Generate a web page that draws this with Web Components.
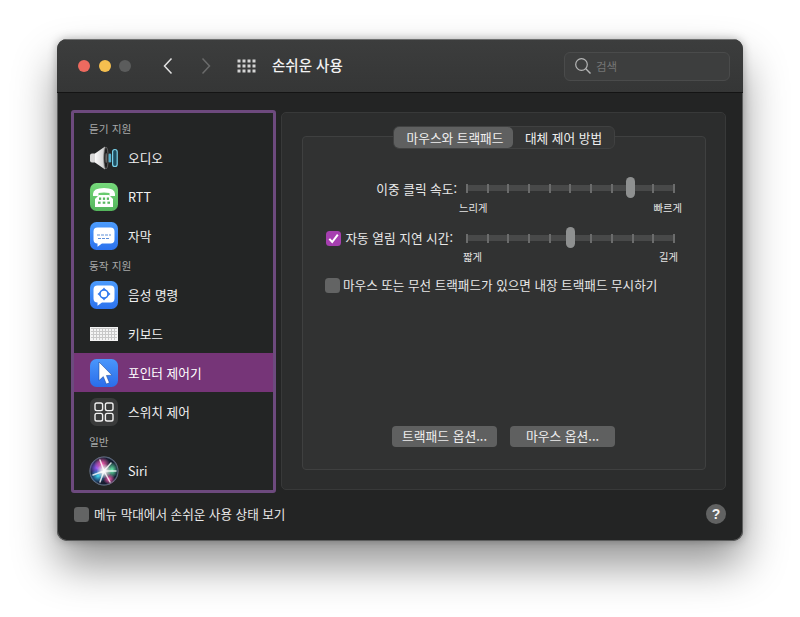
<!DOCTYPE html>
<html lang="ko">
<head>
<meta charset="utf-8">
<title>손쉬운 사용</title>
<style>
  html, body { margin: 0; height: 100%; overflow: hidden; }
  body {
    background: #fff;
    font-family: "Noto Sans CJK KR", "Liberation Sans", sans-serif;
    color: #e8e8e8;
  }
</style>
</head>
<body>
<pref-window>
  <title-bar slot="title" heading="손쉬운 사용"></title-bar>

  <side-list slot="side">
    <side-heading first>듣기 지원</side-heading>
    <side-item icon="audio">오디오</side-item>
    <side-item icon="rtt">RTT</side-item>
    <side-item icon="captions">자막</side-item>
    <side-heading>동작 지원</side-heading>
    <side-item icon="voice">음성 명령</side-item>
    <side-item icon="keyboard">키보드</side-item>
    <side-item icon="pointer" selected>포인터 제어기</side-item>
    <side-item icon="switch">스위치 제어</side-item>
    <side-heading>일반</side-heading>
    <side-item icon="siri">Siri</side-item>
  </side-list>

  <tab-panel slot="main">
    <seg-tabs slot="tabs">
      <span class="on">마우스와 트랙패드</span>
      <span>대체 제어 방법</span>
    </seg-tabs>

    <setting-row style="--top:41px;--end:457px">
      <span slot="label">이중 클릭 속도:</span>
      <tick-slider value="0.79" drop="3" min-label="느리게" max-label="빠르게"></tick-slider>
    </setting-row>

    <setting-row style="--top:13px;--end:453px">
      <mac-check slot="label" checked gap="4" style="font-size:12.7px">자동 열림 지연 시간:</mac-check>
      <tick-slider value="0.5" min-label="짧게" max-label="길게" inset="4"></tick-slider>
    </setting-row>

    <mac-check gap="3" style="margin:12px 0 0 22px">마우스 또는 무선 트랙패드가 있으면 내장 트랙패드 무시하기</mac-check>

    <button-row slot="actions">
      <mac-button>트랙패드 옵션...</mac-button>
      <mac-button>마우스 옵션...</mac-button>
    </button-row>
  </tab-panel>

  <mac-check slot="foot" gap="5">메뉴 막대에서 손쉬운 사용 상태 보기</mac-check>
  <help-button slot="foot"></help-button>
</pref-window>

<script>
// small helper so each element only has to hand over its markup
function shadow(el, html) {
  el.attachShadow({ mode: 'open' }).innerHTML = html
}

const ICONS = {
  audio: `
    <defs>
      <linearGradient id="cone" x1="0" x2="1"><stop offset="0" stop-color="#fafafa"/><stop offset=".7" stop-color="#d6d6d6"/><stop offset="1" stop-color="#8a8a8a"/></linearGradient>
    </defs>
    <rect x="1" y="10.5" width="6.5" height="9" rx="2" fill="#d8d8d8"/>
    <path d="M6 10.5 L16 3.5 Q18.5 15 16 26.5 L6 19.5Z" fill="url(#cone)"/>
    <ellipse cx="17" cy="15" rx="2.2" ry="11" fill="#1d1d1d" stroke="#7b7b7b" stroke-width=".7"/>
    <ellipse cx="17.2" cy="15" rx=".9" ry="5" fill="#666"/>
    <rect x="19.6" y="10.5" width="2.6" height="9" rx="1.3" fill="#56b2cf"/>
    <rect x="23.6" y="6.5" width="4.6" height="17" rx="2.3" fill="#1e4e60" stroke="#7ad2ea" stroke-width="1.2"/>`,
  rtt: `
    <defs><linearGradient id="rg" x1="0" x2="0" y1="0" y2="1"><stop offset="0" stop-color="#76d97b"/><stop offset="1" stop-color="#54b55c"/></linearGradient></defs>
    <rect x="1" y="1" width="28" height="28" rx="6.5" fill="url(#rg)"/>
    <path d="M4 12 Q4 6 15 6 Q26 6 26 12 L26 14 L20.5 14 L20.5 11 Q15 9.8 9.5 11 L9.5 14 L4 14Z" fill="#fff"/>
    <path d="M10 13 L20 13 L24 17 L24 25 L6 25 L6 17Z" fill="#fff"/>
    <g fill="#58b860">
      <rect x="10" y="15.5" width="2.2" height="2.4"/><rect x="13.9" y="15.5" width="2.2" height="2.4"/><rect x="17.8" y="15.5" width="2.2" height="2.4"/>
      <rect x="9" y="19.6" width="2.6" height="2.2"/><rect x="13.7" y="19.6" width="2.6" height="2.2"/><rect x="18.4" y="19.6" width="2.6" height="2.2"/>
    </g>`,
  captions: `
    <defs><linearGradient id="cg" x1="0" x2="0" y1="0" y2="1"><stop offset="0" stop-color="#4c9bfb"/><stop offset="1" stop-color="#2c72ee"/></linearGradient></defs>
    <rect x="1" y="1" width="28" height="28" rx="6.5" fill="url(#cg)"/>
    <path d="M8.5 6.5 H21.5 Q25.5 6.5 25.5 10.5 V18.5 Q25.5 22.5 21.5 22.5 H13 L8.5 25.8 V22.5 Q4.5 22.5 4.5 18.5 V10.5 Q4.5 6.5 8.5 6.5Z" fill="#fff"/>
    <path d="M8 14h14M9 17.5h12" stroke="#5e8fd8" stroke-width="1.2" stroke-dasharray="3 1"/>`,
  voice: `
    <defs><linearGradient id="vg" x1="0" x2="0" y1="0" y2="1"><stop offset="0" stop-color="#4c9bfb"/><stop offset="1" stop-color="#2c72ee"/></linearGradient></defs>
    <rect x="1" y="1" width="28" height="28" rx="6.5" fill="url(#vg)"/>
    <path d="M8.5 5.5 H21.5 Q25.5 5.5 25.5 9.5 V18.5 Q25.5 22.5 21.5 22.5 H13 L8.5 25.8 V22.5 Q4.5 22.5 4.5 18.5 V9.5 Q4.5 5.5 8.5 5.5Z" fill="#fff"/>
    <circle cx="15" cy="14" r="4" fill="none" stroke="#2f78ee" stroke-width="1.6"/>
    <g fill="#2f78ee"><path d="M15 7.5l2 2.4h-4z"/><path d="M15 20.5l2-2.4h-4z"/><path d="M8.5 14l2.4-2v4z"/><path d="M21.5 14l-2.4-2v4z"/></g>`,
  keyboard: `
    <defs><pattern id="keys" x="1" y="9" width="3" height="3" patternUnits="userSpaceOnUse"><rect width="3" height="3" fill="#f4f4f4"/><path d="M0 .5H3M.5 0V3" stroke="#c8c8c8" stroke-width="1"/></pattern></defs>
    <rect x="1" y="8" width="28" height="14" fill="#f2f2f2"/>
    <rect x="2" y="9" width="26" height="12" fill="url(#keys)"/>`,
  pointer: `
    <defs><linearGradient id="pg" x1="0" x2="0" y1="0" y2="1"><stop offset="0" stop-color="#4a97fb"/><stop offset="1" stop-color="#2a6dea"/></linearGradient></defs>
    <rect x="1" y="1" width="28" height="28" rx="6.5" fill="url(#pg)"/>
    <path d="M10 4 L10 22.5 L14.3 18.6 L17.3 26 L20.4 24.7 L17.4 17.5 L23 17.2Z" fill="#fff" stroke="#16408f" stroke-width=".5"/>`,
  switch: `
    <rect x="1" y="1" width="28" height="28" rx="6.5" fill="#3a3b3b"/>
    <g fill="none" stroke="#f0f0f0" stroke-width="1.4">
      <rect x="6" y="6" width="7.6" height="7.6" rx="1.8"/><rect x="16.4" y="6" width="7.6" height="7.6" rx="1.8"/>
      <rect x="6" y="16.4" width="7.6" height="7.6" rx="1.8"/><rect x="16.4" y="16.4" width="7.6" height="7.6" rx="1.8"/>
    </g>`,
  siri: `
    <defs>
      <radialGradient id="sg"><stop offset="0" stop-color="#2a3044"/><stop offset=".88" stop-color="#141c30"/><stop offset="1" stop-color="#76859c"/></radialGradient>
      <radialGradient id="s1"><stop offset="0" stop-color="#ff5cb4"/><stop offset="1" stop-color="#ff5cb4" stop-opacity="0"/></radialGradient>
      <radialGradient id="s2"><stop offset="0" stop-color="#3fe0f2"/><stop offset="1" stop-color="#2a8cf0" stop-opacity="0"/></radialGradient>
      <radialGradient id="s3"><stop offset="0" stop-color="#6cf5b0"/><stop offset="1" stop-color="#5cf0a8" stop-opacity="0"/></radialGradient>
      <radialGradient id="s4"><stop offset="0" stop-color="#9a5cff"/><stop offset="1" stop-color="#7a5cff" stop-opacity="0"/></radialGradient>
      <radialGradient id="s5"><stop offset="0" stop-color="#fff"/><stop offset=".4" stop-color="#fff" stop-opacity=".75"/><stop offset="1" stop-color="#fff" stop-opacity="0"/></radialGradient>
    </defs>
    <circle cx="15" cy="15" r="14.5" fill="url(#sg)"/>
    <ellipse cx="8" cy="12" rx="8" ry="8" fill="url(#s4)"/>
    <ellipse cx="13" cy="8" rx="8" ry="7" fill="url(#s1)"/>
    <ellipse cx="9" cy="20" rx="8" ry="7" fill="url(#s2)"/>
    <ellipse cx="23" cy="14" rx="6" ry="8" fill="url(#s3)"/>
    <ellipse cx="20" cy="23" rx="6" ry="5.5" fill="url(#s1)"/>
    <path d="M15 15 L11 4 M15 15 L22 7 M15 15 L27 15 M15 15 L21 26 M15 15 L4 19 M15 15 L11 26" stroke="#fff" stroke-width="1.5" stroke-linecap="round" opacity=".8"/>
    <circle cx="15" cy="15" r="7.5" fill="url(#s5)"/>`
}

class PrefWindow extends HTMLElement {
  constructor() {
    super()
    shadow(this, `
      <style>
        :host { display: block; width: 686px; margin: 39px 0 0 57px; }
        .win {
          height: 502px; box-sizing: border-box;
          display: flex; flex-direction: column;
          background: #232424; border-radius: 10px; overflow: hidden;
          box-shadow: inset 0 0 0 1px #5c5d5d;
        }
        .shadow { border-radius: 10px; box-shadow: 0 24px 44px rgba(0,0,0,.42), 0 0 10px rgba(0,0,0,.28); }
        .body { flex: 1; display: flex; gap: 5px; padding: 17px 17px 0 14px; }
        .foot {
          height: 48px; box-sizing: border-box; padding: 0 17px 6px 17px;
          display: flex; align-items: center; justify-content: space-between;
        }
      </style>
      <div class="shadow"><div class="win">
        <slot name="title"></slot>
        <div class="body">
          <slot name="side"></slot>
          <slot name="main"></slot>
        </div>
        <div class="foot"><slot name="foot"></slot></div>
      </div></div>`)
  }
}

class TitleBar extends HTMLElement {
  constructor() {
    super()
    shadow(this, `
      <style>
        :host {
          display: flex; align-items: center; height: 54px; box-sizing: border-box;
          background: linear-gradient(#3c3d3d, #353636);
          border-top: 1px solid #6f7070; border-bottom: 1px solid #141414;
          padding: 0 13px 0 21px; flex: none;
        }
        .dot { width: 12px; height: 12px; border-radius: 50%; margin-right: 8.5px; }
        .nav { display: block; }
        .grid { margin-left: 25px; display: block; }
        h1 { margin: 0 0 2px 15px; font: 500 14.5px/20px "Noto Sans CJK KR", sans-serif; color: #f2f2f2; flex: 1; }
        .search {
          width: 166px; height: 29px; box-sizing: border-box;
          border: 1px solid #4a4b4b; border-radius: 6px; background: #3d3e3e;
          display: flex; align-items: center; gap: 4px; padding-left: 9px;
          font-size: 11.5px; color: #757676;
        }
      </style>
      <span class="dot" style="background:#ee6a5f"></span>
      <span class="dot" style="background:#f5bf4f"></span>
      <span class="dot" style="background:#5b5c5c;margin-right:0"></span>
      <svg class="nav" style="margin-left:31px" width="12" height="18" viewBox="0 0 12 18"><path d="M9.5 1.5 L2.5 9 L9.5 16.5" fill="none" stroke="#e2e2e2" stroke-width="1.5"/></svg>
      <svg class="nav" style="margin-left:26px" width="12" height="18" viewBox="0 0 12 18"><path d="M2.5 1.5 L9.5 9 L2.5 16.5" fill="none" stroke="#6a6b6b" stroke-width="1.5"/></svg>
      <svg class="grid" width="20" height="14" viewBox="0 0 20 14" fill="#d4d4d4">${
        [0.5, 5.5, 10.5].map(y => [0.5, 5.5, 10.5, 15.5].map(x => `<rect x="${x}" y="${y}" width="3" height="3"/>`).join('')).join('')
      }</svg>
      <h1>${this.getAttribute('heading')}</h1>
      <div class="search">
        <svg width="18" height="18" viewBox="0 0 18 18"><circle cx="7.5" cy="7.5" r="5.8" fill="none" stroke="#b5b6b6" stroke-width="1.2"/><path d="M11.8 11.8 L16.5 16.5" stroke="#b5b6b6" stroke-width="1.4"/></svg>
        검색
      </div>`)
  }
}

class SideList extends HTMLElement {
  constructor() {
    super()
    shadow(this, `
      <style>
        :host {
          display: flex; flex-direction: column; width: 205px; height: 383px; box-sizing: border-box;
          border: 3px solid #6d4a7e; border-radius: 3px; background: #232525; overflow: hidden;
        }
      </style>
      <slot></slot>`)
  }
}

class SideHeading extends HTMLElement {
  constructor() {
    super()
    shadow(this, `
      <style>
        :host {
          display: flex; align-items: flex-end; box-sizing: border-box; height: 20px; padding: 0 0 2px 15px;
          font-size: 10.7px; line-height: 14px; color: #a8a9a9;
        }
        :host([first]) { height: 25px; }
      </style>
      <slot></slot>`)
  }
}

class SideItem extends HTMLElement {
  constructor() {
    super()
    shadow(this, `
      <style>
        :host {
          display: flex; align-items: center; height: 39px; flex: none;
          padding-left: 15px; gap: 9px;
          font-size: 12.7px; color: #f0f0f0;
        }
        :host([selected]) { background: #763578; color: #fff; }
        svg { width: 30px; height: 30px; flex: none; display: block; }
        span { padding-bottom: 1px; }
      </style>
      <svg viewBox="0 0 30 30">${ICONS[this.getAttribute('icon')]}</svg>
      <span><slot></slot></span>`)
  }
}

class TabPanel extends HTMLElement {
  constructor() {
    super()
    shadow(this, `
      <style>
        :host {
          display: flex; flex-direction: column; width: 445px; height: 378px; box-sizing: border-box;
          margin-top: 2px; padding: 13px 19px 19px 20px;
          background: #2c2d2d; border: 1px solid #383939; border-radius: 5px;
        }
        .tabs { display: flex; justify-content: center; margin-bottom: -13px; position: relative; z-index: 1; }
        .box {
          flex: 1; display: flex; flex-direction: column;
          background: #313232; border: 1px solid #3f4040; border-radius: 4px;
        }
        .fill { flex: 1; display: flex; flex-direction: column; }
        .actions { padding-bottom: 22px; }
      </style>
      <div class="tabs"><slot name="tabs"></slot></div>
      <div class="box">
        <div class="fill"><slot></slot></div>
        <div class="actions"><slot name="actions"></slot></div>
      </div>`)
  }
}

class SegTabs extends HTMLElement {
  constructor() {
    super()
    shadow(this, `
      <style>
        :host {
          display: inline-flex; height: 23px; box-sizing: border-box;
          background: #353636; border: 1px solid #404141; border-radius: 6px;
          font-size: 12.7px; line-height: 21px; color: #efefef;
        }
        ::slotted(span) { display: block; text-align: center; box-sizing: border-box; width: 101px; }
        ::slotted(span.on) { width: 119px; padding: 0 0 0 3px; background: #5f6060; border-radius: 5px; }
      </style>
      <slot></slot>`)
  }
}

// label on the left, slider on the right. the label ends where --end says
class SettingRow extends HTMLElement {
  constructor() {
    super()
    shadow(this, `
      <style>
        :host {
          display: flex; align-items: flex-start; margin-top: var(--top, 0);
          font-size: 12.7px; color: #e8e8e8;
        }
        .label {
          box-sizing: border-box; width: calc(var(--end) - 303px); height: 20px;
          display: flex; justify-content: flex-end; align-items: center; white-space: nowrap;
        }
        .slider { margin-left: calc(466px - var(--end)); }
      </style>
      <div class="label"><slot name="label"></slot></div>
      <div class="slider"><slot></slot></div>`)
  }
}

class TickSlider extends HTMLElement {
  constructor() {
    super()
    const ticks = Array.from({ length: 11 }, () => '<i></i>').join('')
    const inset = this.getAttribute('inset') || 0
    const drop = this.getAttribute('drop') || 2
    shadow(this, `
      <style>
        :host { display: block; width: 209px; }
        .track { position: relative; height: 20px; display: flex; align-items: center; }
        .line { position: absolute; left: 0; right: 0; top: 7px; height: 6px; background: #484949; border-radius: 3px; }
        .ticks { position: relative; flex: 1; display: flex; justify-content: space-between; }
        i { display: block; width: 2px; height: 9px; background: #6b6c6c; }
        .thumb {
          position: absolute; top: -1px; left: calc(var(--v) * 100% - 5px);
          width: 9px; height: 21px; border-radius: 4.5px; background: #8e9090;
        }
        .ends {
          display: flex; justify-content: space-between; margin: ${drop}px -7px 0 -7px;
          padding: 0 ${inset}px; font-size: 10.3px; line-height: 14px; color: #e4e4e4;
        }
      </style>
      <div class="track" style="--v:${this.getAttribute('value')}">
        <div class="line"></div>
        <div class="ticks">${ticks}</div>
        <div class="thumb"></div>
      </div>
      <div class="ends"><span>${this.getAttribute('min-label')}</span><span>${this.getAttribute('max-label')}</span></div>`)
  }
}

class MacCheck extends HTMLElement {
  constructor() {
    super()
    const gap = this.getAttribute('gap') || 5
    const mark = this.hasAttribute('checked')
      ? '<svg width="15" height="15" viewBox="0 0 15 15"><path d="M3.3 7.8 L6.2 11 L11.8 3.6" fill="none" stroke="#fff" stroke-width="2"/></svg>'
      : ''
    shadow(this, `
      <style>
        :host { display: inline-flex; align-items: center; gap: ${gap}px; font-size: 12.6px; line-height: 18px; color: #e8e8e8; white-space: nowrap; }
        .box {
          width: 15px; height: 15px; border-radius: 3.5px; flex: none; display: block;
          background: #636464;
        }
        :host([checked]) .box { background: #a63fb0; }
        svg { display: block; }
      </style>
      <span class="box">${mark}</span>
      <span><slot></slot></span>`)
  }
}

class ButtonRow extends HTMLElement {
  constructor() {
    super()
    shadow(this, `
      <style>
        :host { display: flex; gap: 13px; padding-left: 89px; }
      </style>
      <slot></slot>`)
  }
}

class MacButton extends HTMLElement {
  constructor() {
    super()
    shadow(this, `
      <style>
        :host {
          display: block; width: 105px; height: 21px; border-radius: 4px; background: #5f6060;
          text-align: center; font-size: 12.8px; line-height: 20px; color: #eeeeee; white-space: nowrap;
        }
      </style>
      <slot></slot>`)
  }
}

class HelpButton extends HTMLElement {
  constructor() {
    super()
    shadow(this, `
      <style>
        :host {
          display: block; width: 20px; height: 20px; border-radius: 50%; background: #616262;
          text-align: center; font: 700 14px/20px "Liberation Sans", sans-serif; color: #f4f4f4;
        }
      </style>?`)
  }
}

customElements.define('pref-window', PrefWindow)
customElements.define('title-bar', TitleBar)
customElements.define('side-list', SideList)
customElements.define('side-heading', SideHeading)
customElements.define('side-item', SideItem)
customElements.define('tab-panel', TabPanel)
customElements.define('seg-tabs', SegTabs)
customElements.define('setting-row', SettingRow)
customElements.define('tick-slider', TickSlider)
customElements.define('mac-check', MacCheck)
customElements.define('button-row', ButtonRow)
customElements.define('mac-button', MacButton)
customElements.define('help-button', HelpButton)
</script>
</body>
</html>
